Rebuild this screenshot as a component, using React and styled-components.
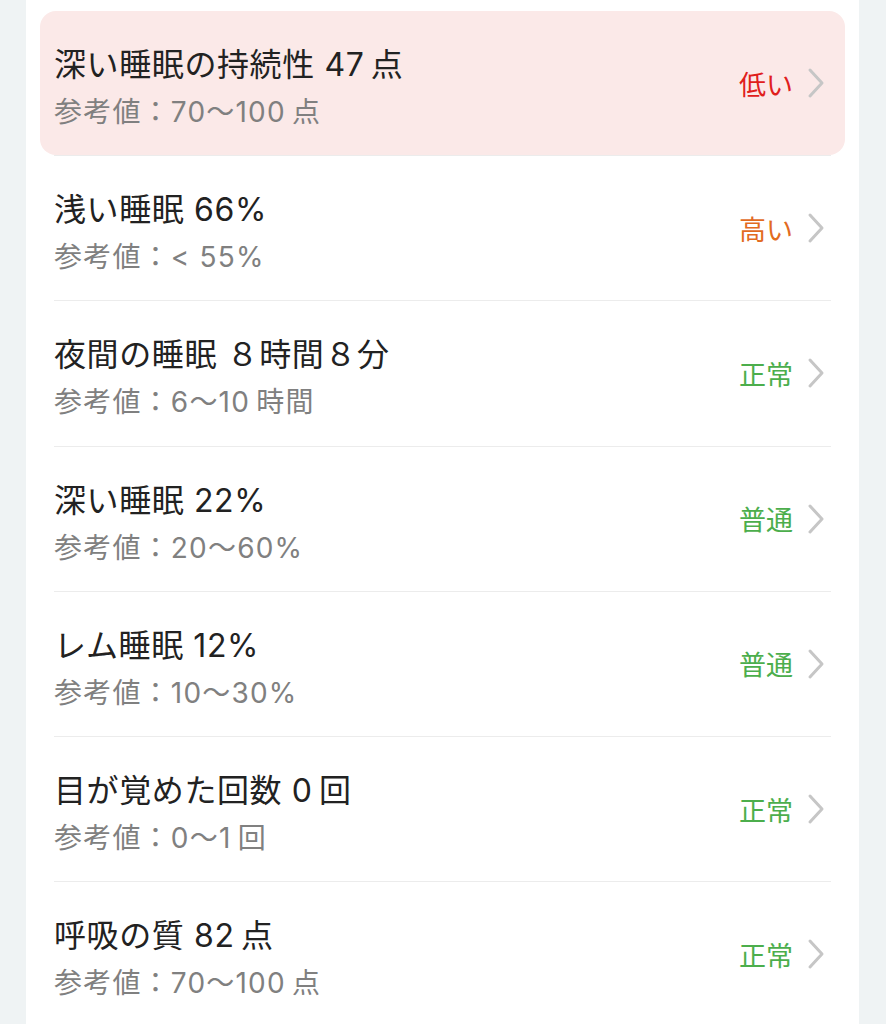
import React from 'react'
import styled, { createGlobalStyle } from 'styled-components'

const GlobalStyle = createGlobalStyle`
  html, body {
    margin: 0;
    padding: 0;
    background: #eff3f4;
  }
  body {
    font-family: Inter, "Noto Sans CJK JP", sans-serif;
  }
`

const Page = styled.div`
  min-height: 1024px;
  padding: 0 27px 0 26px;
  background: #eff3f4;
`

const Card = styled.div`
  background: #fff;
  min-height: 1024px;
  padding: 11px 14px 0;
  box-sizing: border-box;
`

const Row = styled.div`
  display: flex;
  align-items: center;
  height: 144.2px;
  padding: 0 20px 0 14px;
  border-radius: 16px;
  background: ${(p) => (p.$alert ? '#fbe9e8' : 'transparent')};
`

const Texts = styled.div`
  flex: 1;
  display: flex;
  flex-direction: column;
  gap: 8px;
  padding-top: 10px;
`

const Title = styled.div`
  font-size: 32px;
  line-height: 40px;
  color: #222;
  letter-spacing: 0.6px;
`

const Sub = styled.div`
  font-size: 28px;
  line-height: 38px;
  color: #808080;
  letter-spacing: 1.2px;
`

const Status = styled.span`
  font-family: "Noto Sans CJK JP", sans-serif;
  font-size: 27px;
  color: ${(p) => p.$color};
  margin-right: 14px;
`

const Divider = styled.div`
  height: 1px;
  margin: 0 14px;
  background: #ececec;
`

const colors = {
  low: '#e0201c',
  high: '#e26b1f',
  ok: '#4cae4c',
}

const items = [
  { title: '深い睡眠の持続性 47\u2009点', ref: '70～100\u2009点', status: '低い', tone: 'low', alert: true },
  { title: '浅い睡眠 66%', ref: '< 55%', status: '高い', tone: 'high' },
  { title: '夜間の睡眠 ８時間８分', ref: '6～10\u2009時間', status: '正常', tone: 'ok' },
  { title: '深い睡眠 22%', ref: '20～60%', status: '普通', tone: 'ok' },
  { title: 'レム睡眠 12%', ref: '10～30%', status: '普通', tone: 'ok' },
  { title: '目が覚めた回数 0\u2009回', ref: '0～1\u2009回', status: '正常', tone: 'ok' },
  { title: '呼吸の質 82\u2009点', ref: '70～100\u2009点', status: '正常', tone: 'ok' },
]

const Chevron = () => (
  <svg width="18" height="32" viewBox="0 0 18 32" fill="none">
    <path d="M3 3 L15 16 L3 29" stroke="#c6c6c6" strokeWidth="3" strokeLinecap="round" strokeLinejoin="round" />
  </svg>
)

const App = () => (
  <Page>
    <GlobalStyle />
    <Card>
      {items.map((it, i) => (
        <React.Fragment key={i}>
          {i > 0 && <Divider />}
          <Row $alert={it.alert}>
            <Texts>
              <Title>{it.title}</Title>
              <Sub>参考値：{it.ref}</Sub>
            </Texts>
            <Status $color={colors[it.tone]}>{it.status}</Status>
            <Chevron />
          </Row>
        </React.Fragment>
      ))}
    </Card>
  </Page>
)

export default App
